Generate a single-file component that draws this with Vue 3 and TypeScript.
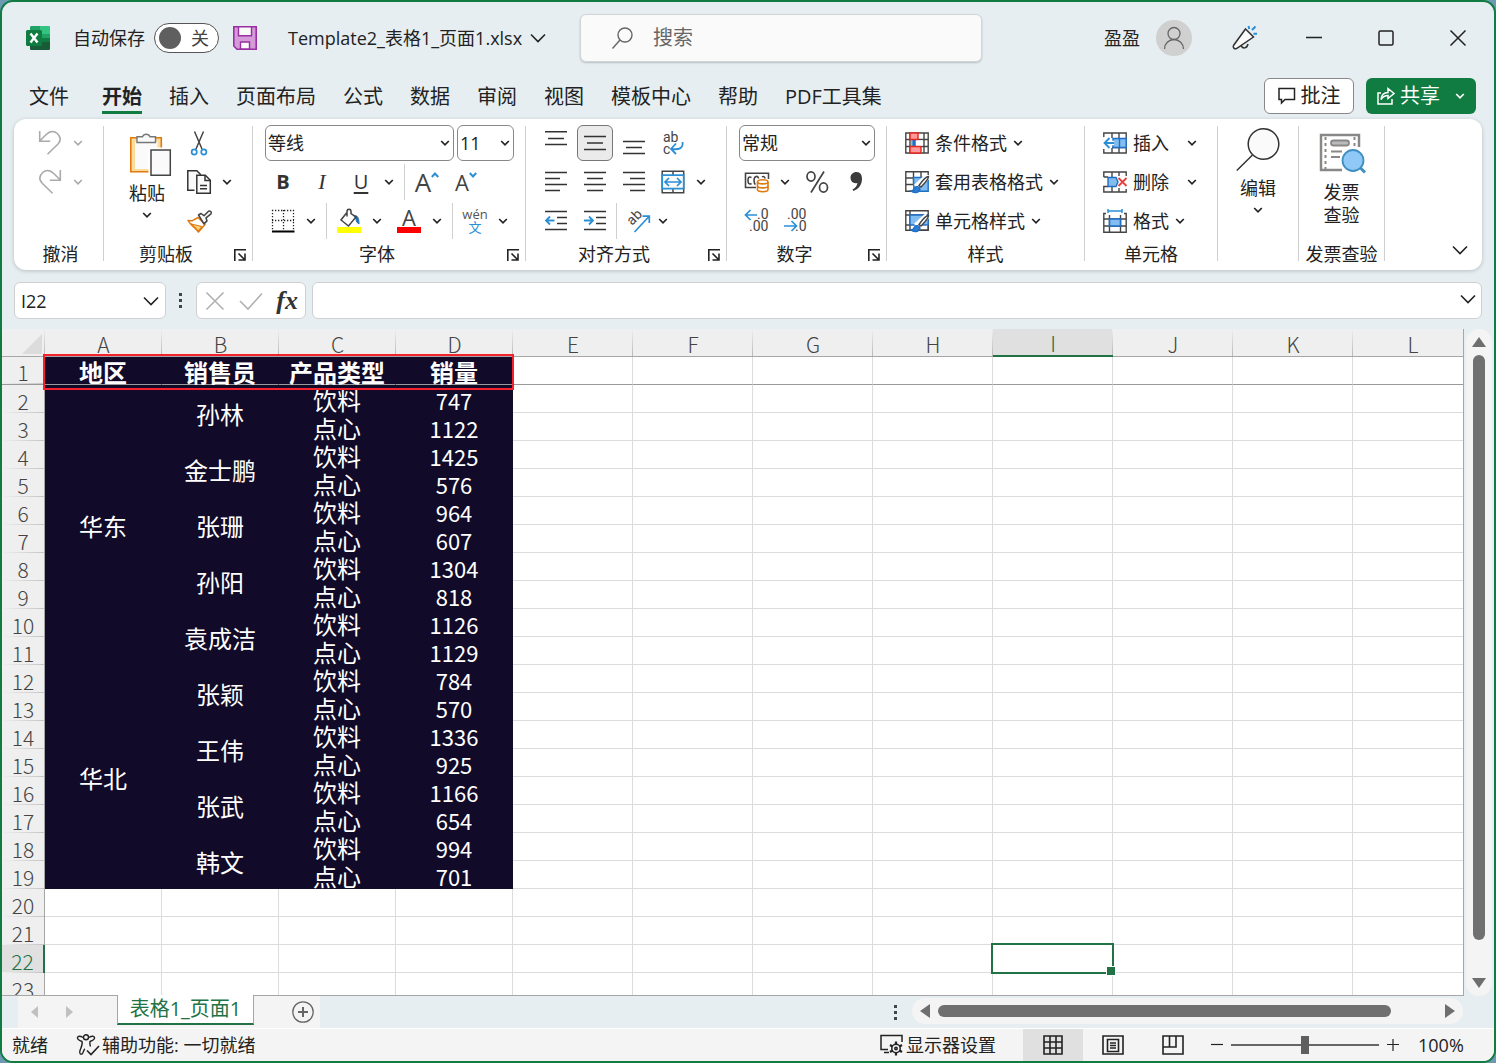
<script setup lang="ts">
import { h, ref } from 'vue'

const Chevron = () =>
  h('svg', { class: 'chev', width: 10, height: 8, viewBox: '0 0 10 8', 'aria-hidden': 'true' }, [
    h('path', { d: 'M1.2 2l3.8 3.8L8.8 2', fill: 'none', stroke: 'currentColor', 'stroke-width': 1.7 }),
  ])

const BigChevron = () =>
  h('svg', { class: 'big-chev', width: 16, height: 10, viewBox: '0 0 16 10', 'aria-hidden': 'true' }, [
    h('path', { d: 'M1 1.5l7 7 7-7', fill: 'none', stroke: 'currentColor', 'stroke-width': 1.6 }),
  ])

const Launcher = () =>
  h('button', { class: 'launcher', 'aria-label': '更多设置' }, [
    h('svg', { width: 12, height: 12, viewBox: '0 0 12 12' }, [
      h('path', { d: 'M.8 12V.8H12M4.5 4.5l6 6M11 4.5V11H4.5', fill: 'none', stroke: '#222', 'stroke-width': 1.6 }),
    ]),
  ])

const tabs = ['文件', '开始', '插入', '页面布局', '公式', '数据', '审阅', '视图', '模板中心', '帮助', 'PDF工具集']
const activeTab = ref('开始')
const autosave = ref(false)
const zoomLevel = ref(100)

const columns = 'ABCDEFGHIJKL'.split('')
const headings = ['地区', '销售员', '产品类型', '销量']

interface Region { name: string; people: { name: string; sales: [number, number] }[] }

const regions: Region[] = [
  {
    name: '华东',
    people: [
      { name: '孙林', sales: [747, 1122] },
      { name: '金士鹏', sales: [1425, 576] },
      { name: '张珊', sales: [964, 607] },
      { name: '孙阳', sales: [1304, 818] },
      { name: '袁成洁', sales: [1126, 1129] },
    ],
  },
  {
    name: '华北',
    people: [
      { name: '张颖', sales: [784, 570] },
      { name: '王伟', sales: [1336, 925] },
      { name: '张武', sales: [1166, 654] },
      { name: '韩文', sales: [994, 701] },
    ],
  },
]

interface Cell { text: string; span: number; kind: string }
interface Row { n: number; cells: Cell[]; blanks: string[] }

const rows: Row[] = []
rows.push({
  n: 1,
  cells: headings.map((text) => ({ text, span: 1, kind: 'head' })),
  blanks: columns.slice(4),
})
for (const region of regions) {
  region.people.forEach((person, i) => {
    person.sales.forEach((value, j) => {
      const cells: Cell[] = []
      if (i === 0 && j === 0) cells.push({ text: region.name, span: region.people.length * 2, kind: 'merged' })
      if (j === 0) cells.push({ text: person.name, span: 2, kind: 'merged' })
      cells.push({ text: j === 0 ? '饮料' : '点心', span: 1, kind: 'word' })
      cells.push({ text: String(value), span: 1, kind: 'num' })
      rows.push({ n: rows.length + 1, cells, blanks: columns.slice(4) })
    })
  })
}
while (rows.length < 23) rows.push({ n: rows.length + 1, cells: [], blanks: columns })
</script>

<template>
  <div class="desktop">
    <div class="window">
      <header class="titlebar">
        <div class="title-left">
          <svg class="logo" width="24" height="24" viewBox="0 0 24 24" aria-hidden="true">
            <path fill="#21a366" d="M5 0h10v8H4V1z" />
            <path fill="#33c481" d="M14 0h9a1 1 0 0 1 1 1v7H14z" />
            <path fill="#107c41" d="M14 8h10v8H14z" />
            <path fill="#21a366" d="M14 8h10v4H14z" />
            <path fill="#185c37" d="M4 12h11v4h9v7a1 1 0 0 1-1 1H5a1 1 0 0 1-1-1z" />
            <rect y="4" width="16" height="16" rx="1.5" fill="#107c41" />
            <path d="M4.500 7.500l7 9M11.500 7.500l-7 9" stroke="#fff" stroke-width="2.400" />
          </svg>
          <label class="auto-text" for="autosave">自动保存</label>
          <span class="toggle"><input id="autosave" v-model="autosave" type="checkbox" /><span>关</span></span>
          <button class="save" aria-label="保存">
            <svg width="24" height="24" viewBox="0 0 24 24">
              <path d="M.8.8h22.400v22.400H4L.8 20z" fill="#d59ad8" stroke="#9a2fa3" stroke-width="1.600" />
              <path d="M5.500.8h13v9h-13zM7.500 23v-7h9v7z" fill="#fafafa" stroke="#9a2fa3" stroke-width="1.400" />
            </svg>
          </button>
          <button class="doc-title">Template2_表格1_页面1.xlsx<BigChevron /></button>
        </div>
        <label class="search">
          <svg width="24" height="24" viewBox="0 0 24 24" aria-hidden="true">
            <circle cx="14" cy="9" r="7" /><path d="M9 14L1.500 22.500" />
          </svg>
          <input type="text" placeholder="搜索" aria-label="搜索" />
        </label>
        <div class="title-right">
          <span class="user">盈盈</span>
          <button class="avatar" aria-label="账户">
            <svg width="24" height="24" viewBox="0 0 24 24" fill="none" stroke="#666" stroke-width="1.300">
              <circle cx="12" cy="7.500" r="6" /><path d="M2.500 23a9.500 9.500 0 0 1 19 0" />
            </svg>
          </button>
          <button class="mega" aria-label="新功能">
            <svg width="26" height="26" viewBox="0 0 26 26" fill="none" stroke="#333" stroke-width="1.500">
              <path d="M10 20c1 4 6 4 7-1" />
              <path d="M14.500 4l8 8L5.500 23.500c-2 1-4-1-3-3z" fill="#fafafa" />
              <path d="M17.500 1l.8 3M24.500 1.500L21 5M26 8.700h-3.500" stroke="#2b8fd6" stroke-width="2" />
            </svg>
          </button>
          <button class="win" aria-label="最小化"><svg width="16" height="16"><path d="M0 7.500h16" /></svg></button>
          <button class="win" aria-label="最大化"><svg width="16" height="16"><rect x="1" y="1" width="14" height="14" rx="1.500" /></svg></button>
          <button class="win" aria-label="关闭"><svg width="16" height="16"><path d="M.5.5l15 15M15.500.5l-15 15" /></svg></button>
        </div>
      </header>

      <nav class="tabs">
        <button v-for="t in tabs" :key="t" class="tab" :class="{ active: t === activeTab }" @click="activeTab = t">{{ t }}</button>
        <button class="comment">
          <svg width="18" height="18" viewBox="0 0 18 18" fill="none" stroke="#222" stroke-width="1.500">
            <path d="M1 1.500h15.500v11H7l-3.500 3.500v-3.500H1z" />
          </svg>批注
        </button>
        <button class="share">
          <svg width="18" height="18" viewBox="0 0 18 18" fill="none" stroke="#fff" stroke-width="1.500">
            <path d="M4 6H1v11h14v-5" /><path d="M4 12.500c.5-5 3.500-7 7-7V1.500l6 5-6 5V8.500c-3 0-5 1-7 4z" />
          </svg>共享<Chevron />
        </button>
      </nav>

      <section class="ribbon">
        <div class="group g-undo">
          <div class="rows">
            <div class="row">
              <button class="ib" aria-label="撤消"><svg width="24" height="25" viewBox="0 0 24 25" class="faded"><path d="M1.700 1v10.200h10.500M1.700 11L8.500 4.200C12 .8 16.300.8 19.300 3.500c3.600 3.500 3.600 7.500.5 10.700L9.500 24.300" /></svg></button>
              <button class="dd faint" aria-label="撤消列表"><Chevron /></button>
            </div>
            <div class="row">
              <button class="ib" aria-label="恢复"><svg width="24" height="25" viewBox="0 0 24 25" class="faded"><path d="M22.300 1v10.200H11.800M22.300 11l-6.800-6.800C12 .8 7.700.8 4.700 3.500 1.100 7 1.100 11 4.200 14.200l10.300 10.100" /></svg></button>
              <button class="dd faint" aria-label="恢复列表"><Chevron /></button>
            </div>
          </div>
          <div class="caption"><span>撤消</span></div>
        </div>
        <i class="sep"></i>

        <div class="group g-clip">
          <div class="body">
            <button class="big paste">
              <svg width="48" height="48" viewBox="0 0 48 48">
                <path d="M7.800 7.800h30.500v34H7.800z" fill="#fbdc9a" stroke="#e07a10" stroke-width="1.600" />
                <path d="M12 11.500h22.500v27.500H12z" fill="#fafafa" />
                <path d="M14 12.500V6.800h5.500a4 4 0 0 1 7.500 0h5.500v5.700z" fill="#fafafa" stroke="#777" stroke-width="1.400" />
                <path d="M25.500 17.500H48V48H25.500z" fill="#fff" />
                <path d="M28 20h19.300v25.300H28z" fill="#fafafa" stroke="#444" stroke-width="1.500" />
              </svg>
              <span>粘贴</span><Chevron />
            </button>
            <div class="rows">
              <div class="row">
                <button class="ib" aria-label="剪切">
                  <svg width="24" height="26" viewBox="0 0 24 26" fill="none">
                    <path d="M7.500 1.500l7.500 17.500M16.500 1.500L9 19" stroke="#444" stroke-width="1.500" />
                    <circle cx="7.200" cy="22" r="2.600" stroke="#2b8fd6" stroke-width="1.700" /><circle cx="16.800" cy="22" r="2.600" stroke="#2b8fd6" stroke-width="1.700" />
                  </svg>
                </button>
              </div>
              <div class="row">
                <button class="ib" aria-label="复制">
                  <svg width="24" height="24" viewBox="0 0 24 24" fill="#fafafa" stroke="#333" stroke-width="1.500">
                    <path d="M7.500 20.200H.8V.8h9l4 4" /><path d="M9.800 5.300h8.500l5 5v13H9.800z" /><path d="M18 5.300v5.200h5.300M13 15.500h7M13 18.800h7" fill="none" />
                  </svg>
                </button>
                <button class="dd" aria-label="复制选项"><Chevron /></button>
              </div>
              <div class="row">
                <button class="ib" aria-label="格式刷">
                  <svg width="25" height="24" viewBox="0 0 25 24" stroke-linejoin="round">
                    <path d="M1 11.500l4 .3 6-3.300 7 7-6.500 7.500C8 18 4 17 1 11.500z" fill="#fff" stroke="#e07a10" stroke-width="1.500" />
                    <path d="M4 15l11 2.500-4 5c-1-3-4-4-7-7.500z" fill="#fbd07a" stroke="#e07a10" stroke-width="1.200" />
                    <path d="M11.500 6l2.500-1.500 3 2.200 4.500-4.500a1.900 1.900 0 0 1 2.500 2.700l-5 4 1 3-3 3z" fill="#fafafa" stroke="#444" stroke-width="1.500" />
                  </svg>
                </button>
              </div>
            </div>
          </div>
          <div class="caption"><span>剪贴板</span><Launcher /></div>
        </div>
        <i class="sep"></i>

        <div class="group g-font">
          <div class="rows">
            <div class="row">
              <span class="combo font-name"><select aria-label="字体"><option>等线</option></select><Chevron /></span>
              <span class="combo font-size"><select aria-label="字号"><option>11</option></select><Chevron /></span>
            </div>
            <div class="row">
              <button class="ib bold">B</button><button class="ib ital">I</button><button class="ib under">U</button>
              <button class="dd" aria-label="下划线选项"><Chevron /></button>
              <i class="vline"></i>
              <button class="ib grow" aria-label="增大字号"><span>A</span><svg width="8" height="6"><path d="M.8 5L4 1.500 7.200 5" /></svg></button>
              <button class="ib shrink" aria-label="减小字号"><span>A</span><svg width="8" height="6"><path d="M.8 1L4 4.500 7.200 1" /></svg></button>
            </div>
            <div class="row">
              <button class="ib" aria-label="边框">
                <svg width="24" height="24" viewBox="0 0 24 24" stroke="#222">
                  <path d="M1.500 1v20M12.500 1v20M22.500 1v20M1 1.500h22M1 11.500h22" stroke-width="1.300" stroke-dasharray="1.300 1.700" /><path d="M1 22.500h22.500" stroke="#000" stroke-width="2" />
                </svg>
              </button>
              <button class="dd" aria-label="边框选项"><Chevron /></button>
              <i class="vline"></i>
              <button class="ib" aria-label="填充颜色">
                <svg width="24" height="26" viewBox="0 0 24 26">
                  <path d="M17 8c3-1 5 1 5 8-2-1-3-3-3-5z" fill="#1f6fb5" stroke="#1f6fb5" />
                  <path d="M9.500 5L4 12l7.500 6L19 9l-5-3.500V3.500c0-3-4-3-4 0v5" fill="none" stroke="#444" stroke-width="1.500" /><path d="M0 19h24v6H0z" fill="#ff0" />
                </svg>
              </button>
              <button class="dd" aria-label="填充颜色选项"><Chevron /></button>
              <button class="ib color" aria-label="字体颜色"><span>A</span><i></i></button>
              <button class="dd" aria-label="字体颜色选项"><Chevron /></button>
              <i class="vline"></i>
              <button class="ib pinyin"><span>wén</span><span class="blue">文</span></button>
              <button class="dd" aria-label="拼音选项"><Chevron /></button>
            </div>
          </div>
          <div class="caption"><span>字体</span><Launcher /></div>
        </div>
        <i class="sep"></i>

        <div class="group g-align">
          <div class="rows">
            <div class="row">
              <button class="ib" aria-label="顶端对齐"><svg class="ln" width="22" height="24"><path d="M0 .8h22M3 7.500h16M0 13.500h22" /></svg></button>
              <button class="ib pressed" aria-label="垂直居中"><svg class="ln" width="22" height="24"><path d="M0 5.500h22M3 12h16M0 18.500h22" /></svg></button>
              <button class="ib" aria-label="底端对齐"><svg class="ln" width="22" height="24"><path d="M0 10.500h22M3 16.500h16M0 22.500h22" /></svg></button>
              <button class="ib" aria-label="自动换行">
                <svg width="24" height="26" viewBox="0 0 24 26" fill="none">
                  <g class="glyph"><text x="2" y="12">ab</text><text x="2" y="24">c</text></g>
                  <path d="M21.500 12c1 6-3 8-11 7M15 13.500l-5 5.500 5 5" stroke="#2b8fd6" stroke-width="1.800" />
                </svg>
              </button>
            </div>
            <div class="row">
              <button class="ib" aria-label="左对齐"><svg class="ln" width="22" height="24"><path d="M0 2.500h22M0 8.500h15M0 14.500h22M0 20.500h15" /></svg></button>
              <button class="ib" aria-label="居中"><svg class="ln" width="22" height="24"><path d="M0 2.500h22M3 8.500h16M0 14.500h22M3 20.500h16" /></svg></button>
              <button class="ib" aria-label="右对齐"><svg class="ln" width="22" height="24"><path d="M0 2.500h22M7 8.500h15M0 14.500h22M7 20.500h15" /></svg></button>
              <button class="ib" aria-label="合并后居中">
                <svg width="24" height="24" viewBox="0 0 24 24" fill="none" stroke="#444" stroke-width="1.500">
                  <path d="M1.200 1.200h21.500v21.500H1.200zM12 1v4M12 19v4" /><path d="M1.200 5.200h21.500v13.500H1.200z" fill="#fafafa" stroke="#2b8fd6" stroke-width="1.700" />
                  <path d="M4.500 12h15M8 8l-4 4 4 4M16 8l4 4-4 4" stroke="#2b8fd6" stroke-width="1.700" />
                </svg>
              </button>
              <button class="dd" aria-label="合并选项"><Chevron /></button>
            </div>
            <div class="row">
              <button class="ib" aria-label="减少缩进"><svg class="ln" width="22" height="24"><path d="M0 2.500h22M12 8.500h10M12 14.500h10M0 20.500h22" /><path class="bl" d="M1 11.500h8.500M5 7.500l-4 4 4 4" /></svg></button>
              <button class="ib" aria-label="增加缩进"><svg class="ln" width="22" height="24"><path d="M0 2.500h22M12 8.500h10M12 14.500h10M0 20.500h22" /><path class="bl" d="M0 11.500h8.500M5 7.500l4 4-4 4" /></svg></button>
              <i class="vline tight"></i>
              <button class="ib" aria-label="方向">
                <svg width="26" height="26" viewBox="0 0 26 26" fill="none">
                  <g class="glyph"><text x="0" y="0" transform="translate(7 18) rotate(-45)">ab</text></g>
                  <path d="M9.500 24L24 8.500M17.500 8.200h6.800v6.800" stroke="#2b8fd6" stroke-width="1.700" />
                </svg>
              </button>
              <button class="dd slim" aria-label="方向选项"><Chevron /></button>
            </div>
          </div>
          <div class="caption"><span>对齐方式</span><Launcher /></div>
        </div>
        <i class="sep"></i>

        <div class="group g-num">
          <div class="rows">
            <div class="row"><span class="combo num-format"><select aria-label="数字格式"><option>常规</option></select><Chevron /></span></div>
            <div class="row">
              <button class="ib" aria-label="会计数字格式">
                <svg width="26" height="22" viewBox="0 0 26 22" fill="none" stroke="#444" stroke-width="1.600">
                  <path d="M12 16.500H1.500V2.200h23V8" /><path d="M7.500 6.500C4.500 5 4 7 4 9.500s1 4.500 3.500 3M11.500 13.500c-2-1-2-7.500.5-8 1.500-.4 2.500.5 2.500 2M18 6c1-.8 3-.5 3 1.500" />
                  <path d="M13.500 11c0-3 10.500-3 10.500 0v7.500c0 3-10.500 3-10.500 0z" fill="#fff" stroke="#e07a10" /><path d="M13.500 11c0 2.500 10.500 2.500 10.500 0M13.500 15c0 2.500 10.500 2.500 10.500 0" stroke="#e07a10" />
                </svg>
              </button>
              <button class="dd" aria-label="会计格式选项"><Chevron /></button>
              <button class="ib pct" aria-label="百分比样式">
                <svg width="24" height="24" viewBox="0 0 24 24" fill="none" stroke="#444" stroke-width="1.700"><ellipse cx="6" cy="6.500" rx="4" ry="4.600" /><ellipse cx="18.500" cy="17.500" rx="4" ry="4.600" /><path d="M19 1.500L6 22.500" /></svg>
              </button>
              <button class="ib" aria-label="千位分隔样式">
                <svg width="24" height="24" viewBox="0 0 24 24"><path d="M12.500 2c4 0 5.500 3 5.500 7 0 5-3 10-8.500 12l-1-1.500c3-1.500 4.500-3.500 5-6.500-4 1-7-1.500-7-5.500C6.500 4.500 9 2 12.500 2z" fill="#3b3b3b" /></svg>
              </button>
            </div>
            <div class="row">
              <button class="ib" aria-label="增加小数位数">
                <svg width="26" height="26" viewBox="0 0 26 26" fill="none"><g class="glyph digits"><text x="13" y="11">.0</text><text x="5" y="23">.00</text></g><path d="M1.500 7H13M6.500 2l-5 5 5 5" stroke="#2b8fd6" stroke-width="1.700" /></svg>
              </button>
              <button class="ib" aria-label="减少小数位数">
                <svg width="26" height="26" viewBox="0 0 26 26" fill="none"><g class="glyph digits"><text x="4" y="11">.00</text><text x="12" y="23">.0</text></g><path d="M1 18h12M8.500 13l5 5-5 5" stroke="#2b8fd6" stroke-width="1.700" /></svg>
              </button>
            </div>
          </div>
          <div class="caption"><span>数字</span><Launcher /></div>
        </div>
        <i class="sep"></i>

        <div class="group g-style">
          <div class="rows">
            <button class="row wide">
              <svg width="24" height="22" viewBox="0 0 24 22" fill="none" stroke="#444" stroke-width="1.400">
                <path d="M.8 1h22.400v20H.8zM5 1v20M19 1v20M1 7.500h22M1 14.500h22" /><path d="M6 7.500h6v7H6z" fill="#83bdf0" stroke="none" /><path d="M9 7.500v7" stroke="#1f6fc5" stroke-width="3" /><path d="M5 1h8v6.500H5zM5 14.500h11V21H5z" fill="#ff9a9a" stroke="#e8251f" /><path d="M11 8.500h7v5h-7z" fill="#fff" stroke="none" />
              </svg><span>条件格式</span><Chevron />
            </button>
            <button class="row wide">
              <svg width="24" height="24" viewBox="0 0 24 24" fill="none" stroke="#444" stroke-width="1.400">
                <path d="M23.200 5V1.800H.8v19.500H6M8.500 2v6M16 2v6M1 8h22M1 14.500h7M8.500 8v7" /><path d="M8.500 7.500h14.700v13.800H9z" fill="#83bdf0" stroke="#1f6fc5" />
                <path d="M22.500 6.500L11 17" stroke="#fff" stroke-width="6" /><path d="M23.500 6.500c-2 0-6 4-9.500 9l2 1.500c4-4 7.500-8.500 7.500-10.500z" fill="#fafafa" /><path d="M6 21c2 0 3-1 3.500-3 1-2 5-2 5.500 1-1 4-6 4.500-9 2z" fill="#2b7fd0" stroke="#1f6fc5" />
              </svg><span>套用表格格式</span><Chevron />
            </button>
            <button class="row wide">
              <svg width="24" height="24" viewBox="0 0 24 24" fill="none" stroke="#444" stroke-width="1.400">
                <path d="M.8 1.800h22.400v19.500H.8zM5 2v19M1 6h22M1 16h5" /><path d="M5 6h18.200v10H5z" fill="#83bdf0" stroke="#1f6fc5" /><path d="M23 16v5H12" fill="#fff" />
                <path d="M22.500 6.500L11 17" stroke="#fff" stroke-width="6" /><path d="M23.500 6.500c-2 0-6 4-9.500 9l2 1.500c4-4 7.500-8.500 7.500-10.500z" fill="#fafafa" /><path d="M6 21c2 0 3-1 3.500-3 1-2 5-2 5.500 1-1 4-6 4.500-9 2z" fill="#2b7fd0" stroke="#1f6fc5" />
              </svg><span>单元格样式</span><Chevron />
            </button>
          </div>
          <div class="caption"><span>样式</span></div>
        </div>
        <i class="sep"></i>

        <div class="group g-cells">
          <div class="rows">
            <button class="row wide far">
              <svg width="24" height="22" viewBox="0 0 24 22" fill="none" stroke="#444" stroke-width="1.400">
                <path d="M.8 5V1h22.400v20H.8v-4M9 1v5M16 1v20M9 16v5M9 15.500h14" /><path d="M10 6.500h13.200v9H10z" fill="#83bdf0" stroke="#1f6fc5" /><path d="M16.500 7v8" stroke="#1f6fc5" /><path d="M11 11H1.500M6.500 6l-5 5 5 5" stroke="#fff" stroke-width="4.500" /><path d="M11 11H1.500M6.500 6l-5 5 5 5" stroke="#2b8fd6" stroke-width="1.800" />
              </svg><span>插入</span><Chevron />
            </button>
            <button class="row wide far">
              <svg width="24" height="22" viewBox="0 0 24 22" fill="none" stroke="#444" stroke-width="1.400">
                <path d="M.8 6V1h22.400v4M.8 6H5M5 15.500H.8V21h22.400v-3M9 1v5M16 1v4M9 16v5M16 17v4" /><path d="M5 6.500h8l2 4.500-2 4.500H5z" fill="#83bdf0" stroke="#1f6fc5" /><path d="M15.500 7l8 8M23.500 7l-8 8" stroke="#e8403c" stroke-width="1.800" />
              </svg><span>删除</span><Chevron />
            </button>
            <button class="row wide">
              <svg width="24" height="24" viewBox="0 0 24 24" fill="none" stroke="#444" stroke-width="1.400">
                <path d="M3 4.500H.8v18.700h22.400V4.500H21M6.500 6v17M17.500 6v17M1 10h22M1 17h22" /><path d="M6.500 10h11v7h-11z" fill="#83bdf0" stroke="#1f6fc5" stroke-width="1.600" /><path d="M5 2h14M5 0v4M19 0v4" stroke="#2b8fd6" stroke-width="1.500" />
              </svg><span>格式</span><Chevron />
            </button>
          </div>
          <div class="caption"><span>单元格</span></div>
        </div>
        <i class="sep"></i>

        <div class="group g-edit">
          <button class="big edit">
            <svg width="44" height="46" viewBox="0 0 44 46" fill="none" stroke="#333" stroke-width="1.500"><circle cx="27.500" cy="17" r="15.300" fill="#fafafa" /><path d="M16.500 28L.8 43.500" /></svg>
            <span>编辑</span><Chevron />
          </button>
        </div>
        <i class="sep"></i>

        <div class="group g-invoice">
          <button class="big invoice">
            <svg width="48" height="42" viewBox="0 0 48 42" fill="none" stroke="#8a8886" stroke-width="2.500">
              <path d="M24 38H3V3h38v12" /><path d="M7.500 5v32M36.500 5v9" stroke-dasharray="3 3" stroke-width="2" />
              <rect x="13" y="8.500" width="18" height="5" rx="2.500" fill="#bbb" stroke-width="1.800" /><path d="M13 19.500h11M13 25h9" stroke-width="2" />
              <path d="M41 34.500l6 6" stroke="#3f8fc0" stroke-width="3" /><circle cx="35" cy="28.500" r="10.500" fill="#90c8f8" stroke="#3f8fc0" stroke-width="1.800" />
            </svg>
            <span>发票</span><span>查验</span>
          </button>
          <div class="caption"><span>发票查验</span></div>
        </div>
        <i class="sep"></i>
        <button class="collapse" aria-label="折叠功能区"><BigChevron /></button>
      </section>

      <section class="formula">
        <div class="namebox"><input type="text" value="I22" aria-label="名称框" /><BigChevron /></div>
        <i class="dots"></i>
        <div class="fx">
          <button aria-label="取消"><svg width="20" height="20"><path d="M1.500 1.500l17 17M18.500 1.500l-17 17" /></svg></button>
          <button aria-label="输入"><svg width="24" height="20"><path d="M1 10l8 8L23 2.500" /></svg></button>
          <button class="fn" aria-label="插入函数">fx</button>
        </div>
        <div class="bar"><input type="text" aria-label="编辑栏" /><BigChevron /></div>
      </section>

      <section class="sheet">
        <div class="viewport">
          <table class="grid">
            <colgroup>
              <col class="c-row" />
              <col v-for="c in columns" :key="c" :class="c < 'E' ? 'c-data' : 'c-std'" />
            </colgroup>
            <thead>
              <tr>
                <th class="corner"><svg width="20" height="20"><path d="M20 0v20H0z" fill="#dcdcdc" /></svg></th>
                <th v-for="c in columns" :key="c" scope="col" :class="{ sel: c === 'I' }">{{ c }}</th>
              </tr>
            </thead>
            <tbody>
              <tr v-for="row in rows" :key="row.n" :class="{ frozen: row.n === 1 }">
                <th scope="row" :class="{ sel: row.n === 22 }">{{ row.n }}</th>
                <td v-for="(cell, i) in row.cells" :key="'d' + i" class="dark" :class="cell.kind" :rowspan="cell.span">{{ cell.text }}</td>
                <td v-for="c in row.blanks" :key="c" :class="{ current: row.n === 22 && c === 'I' }"></td>
              </tr>
            </tbody>
          </table>
          <div class="marker"></div>
        </div>
        <div class="vscroll">
          <svg width="14" height="10"><path d="M7 0l7 10H0z" /></svg>
          <i></i>
          <svg class="down" width="14" height="10"><path d="M7 10l7-10H0z" /></svg>
        </div>
      </section>

      <section class="sheetbar">
        <div class="sheet-tabs">
          <button class="nav-arrow" aria-label="上一张"><svg width="8" height="12"><path d="M7 0v12L0 6z" /></svg></button>
          <button class="nav-arrow" aria-label="下一张"><svg width="8" height="12"><path d="M1 0v12l7-6z" /></svg></button>
          <button class="sheet-tab">表格1_页面1</button>
          <button class="add" aria-label="新工作表"><svg width="22" height="22" viewBox="0 0 22 22" fill="none" stroke="#666"><circle cx="11" cy="11" r="10.200" stroke-width="1.300" /><path d="M11 6v10M6 11h10" stroke-width="2" /></svg></button>
        </div>
        <i class="dots small"></i>
        <div class="hscroll">
          <svg width="10" height="14"><path d="M10 0v14L0 7z" /></svg>
          <i></i>
          <svg width="10" height="14"><path d="M0 0v14l10-7z" /></svg>
        </div>
      </section>

      <footer class="status">
        <span class="ready">就绪</span>
        <button class="access">
          <svg width="24" height="22" viewBox="0 0 24 22" fill="none" stroke="#222" stroke-width="1.400">
            <path d="M7 3.500c-3-2-5-1.500-5.500 0S2 6 6 7.500c1 3-1 6-2 9s.5 4 2 3.500 1-4 3-5M13 3.500c3-2 5-1.500 5.500 0S18 6 14 7.500c-.5 2 0 3.500.5 5" /><circle cx="10" cy="3.200" r="2.500" /><path d="M11 16.500l4 4 8-8.500" stroke-width="1.600" />
          </svg>辅助功能: 一切就绪
        </button>
        <button class="display">
          <svg width="24" height="22" viewBox="0 0 24 22" fill="none" stroke="#222" stroke-width="1.500">
            <path d="M8 15.500H1V1.500h21V8M4 18.500h5" /><circle cx="16" cy="14.500" r="4.200" stroke-width="1.500" /><circle cx="16" cy="14.500" r="1.200" /><path d="M16 7.500v3M16 18.500v3M10 11l2.500 1.500M19.500 16.500L22 18M10 18l2.500-1.500M19.500 12.500L22 11" stroke-width="2.200" />
          </svg>显示器设置
        </button>
        <button class="view on" aria-label="普通"><svg width="20" height="20"><path d="M1 1h18v18H1zM7 1v18M13 1v18M1 7h18M1 13h18" /></svg></button>
        <button class="view" aria-label="页面布局"><svg width="22" height="20"><path d="M1 1h20v18H1zM5.500 4.500h11v12h-11zM8 8h6M8 10.500h6M8 13h6" /></svg></button>
        <button class="view" aria-label="分页预览"><svg width="22" height="20"><path d="M1 1h20v18H1zM1 12h13V1M7.500 1v11" /></svg></button>
        <button class="step" aria-label="缩小"><svg width="12" height="12"><path d="M0 5.500h12" /></svg></button>
        <input v-model="zoomLevel" class="zoom" type="range" min="10" max="190" aria-label="缩放" />
        <button class="step" aria-label="放大"><svg width="12" height="12"><path d="M0 5.500h12M6 0v12" /></svg></button>
        <span class="percent">{{ zoomLevel }}%</span>
      </footer>
    </div>
  </div>
</template>

<style>
body {
  margin: 0;
  background: #6d9ab2;
}
</style>

<style scoped>
.desktop,
.desktop * {
  box-sizing: border-box;
}
.desktop {
  height: 100vh;
  font: 18px/24px 'Open Sans', 'Noto Sans CJK SC', sans-serif;
  color: #222;
}
button,
input,
select {
  font: inherit;
  color: inherit;
  border: 0;
  padding: 0;
  margin: 0;
  background: none;
}
input {
  outline: none;
  min-width: 0;
}
svg {
  display: block;
  flex: none;
  overflow: visible;
}
i {
  display: block;
  flex: none;
}
.window {
  height: 100%;
  display: flex;
  flex-direction: column;
  border: 2px solid #107c41;
  border-radius: 13px;
  background: #e6eef1;
  overflow: hidden;
}

/* title bar */
.titlebar {
  flex: none;
  height: 72px;
  display: flex;
  align-items: center;
}
.title-left {
  flex: none;
  width: 578px;
  padding-left: 24px;
  display: flex;
  align-items: center;
}
.auto-text {
  margin-left: 23px;
}
.toggle {
  width: 65px;
  height: 30px;
  margin-left: 9px;
  padding: 0 9px 0 4px;
  border: 1px solid #555;
  border-radius: 15px;
  background: #fff;
  display: flex;
  align-items: center;
  justify-content: space-between;
}
.toggle input {
  appearance: none;
  width: 22px;
  height: 22px;
  border-radius: 50%;
  background: #5f5f5f;
}
.toggle span {
  color: #444;
}
.save {
  margin-left: 14px;
}
.doc-title {
  margin-left: 31px;
  display: flex;
  align-items: center;
  gap: 8px;
  white-space: nowrap;
}
.search {
  flex: 0 1 402px;
  height: 48px;
  padding-left: 30px;
  display: flex;
  align-items: center;
  gap: 18px;
  border: 1px solid #d2d5d7;
  border-radius: 6px;
  background: #fafafa;
  box-shadow: 0 1px 2px #0003;
  font-size: 20px;
}
.search svg {
  fill: none;
  stroke: #666;
  stroke-width: 1.4;
}
.search input {
  flex: 1;
}
.search input::placeholder {
  color: #666;
  opacity: 1;
}
.title-right {
  margin-left: auto;
  display: flex;
  align-items: center;
}
.avatar {
  width: 36px;
  height: 36px;
  margin-left: 16px;
  border-radius: 50%;
  background: #d0d0d0;
  display: grid;
  place-items: center;
}
.mega {
  width: 36px;
  margin: 0 16px 0 34px;
  display: grid;
  place-items: center;
}
.win {
  width: 72px;
  height: 48px;
  display: grid;
  place-items: center;
}
.win svg {
  fill: none;
  stroke: #222;
  stroke-width: 1.5;
}

/* ribbon tabs */
.tabs {
  flex: none;
  height: 36px;
  margin: 4px 18px 5px 27px;
  display: flex;
  gap: 27px;
  font-size: 20px;
}
.tab {
  height: 36px;
  padding-top: 5px;
  border-bottom: 3px solid transparent;
  white-space: nowrap;
}
.tab:first-child {
  margin-right: 6px;
}
.tab.active {
  font-weight: 700;
  border-color: #107c41;
}
.comment,
.share {
  height: 36px;
  display: flex;
  align-items: center;
  justify-content: center;
  gap: 5px;
  border-radius: 6px;
  white-space: nowrap;
}
.comment {
  width: 90px;
  margin-left: auto;
  border: 1px solid #888;
  background: #fff;
}
.share {
  width: 110px;
  margin-left: -15px;
  background: #107c41;
  color: #fff;
}
.share .chev {
  margin-left: 10px;
}

/* ribbon */
.ribbon {
  flex: none;
  margin: 0 12px;
  padding: 4px 0 2px;
  display: flex;
  border-radius: 12px;
  background: #fff;
  box-shadow: 0 1px 4px #0003;
}
.group {
  flex: none;
  display: flex;
  flex-direction: column;
}
.sep {
  width: 1px;
  margin: 3px 0 7px;
  background: #d0d0d0;
}
.body {
  display: flex;
}
.rows {
  display: flex;
  flex-direction: column;
}
.row {
  height: 39px;
  display: flex;
  align-items: center;
}
.caption {
  height: 28px;
  margin-top: auto;
  display: flex;
  align-items: center;
  text-align: center;
}
.caption span {
  flex: 1;
}
.launcher {
  width: 24px;
  height: 28px;
  padding-top: 2px;
  display: grid;
  place-items: center;
}
.g-undo {
  width: 89px;
}
.g-undo .rows {
  padding-left: 18px;
}
.g-undo .caption {
  padding-left: 4px;
}
.faded {
  fill: none;
  stroke: #aaa;
  stroke-width: 1.6;
}
.g-clip {
  width: 148px;
}
.g-font {
  width: 272px;
}
.g-align {
  width: 200px;
}
.g-num {
  width: 159px;
}
.g-style {
  width: 197px;
}
.g-cells {
  width: 132px;
}
.g-edit {
  width: 80px;
  align-items: center;
}
.g-invoice {
  width: 85px;
}
.g-font .rows,
.g-align .rows,
.g-num .rows {
  padding-left: 12px;
}
.ib {
  flex: none;
  width: 36px;
  height: 36px;
  display: flex;
  align-items: center;
  justify-content: center;
}
.ib + .ib {
  margin-left: 3px;
}
.dd {
  width: 20px;
  height: 36px;
  display: grid;
  place-items: center;
}
.dd.slim {
  width: 14px;
}
.dd.faint {
  color: #aaa;
}
.dd + .ib {
  margin-left: 4px;
}
.vline {
  width: 1px;
  height: 36px;
  margin: 0 4px 0 5px;
  background: #d0d0d0;
}
.vline.tight {
  margin: 0 3px;
}
.pressed {
  border: 1px solid #777;
  border-radius: 6px;
  background: #ebebeb;
}
.big {
  height: 117px;
  display: flex;
  flex-direction: column;
  align-items: center;
}
.paste {
  width: 54px;
  margin: 0 7px 0 16px;
  padding-top: 7px;
}
.paste span,
.edit span {
  margin: 3px 0 6px;
}
.edit {
  padding-top: 4px;
}
.invoice {
  padding-top: 9px;
}
.invoice span {
  line-height: 23px;
}
.invoice svg {
  margin-bottom: 7px;
}
.combo {
  height: 36px;
  position: relative;
  display: flex;
  align-items: center;
}
.combo select {
  appearance: none;
  width: 100%;
  height: 36px;
  padding-left: 2px;
  border: 1px solid #888;
  border-radius: 6px;
  background: #fff;
}
.combo .chev {
  position: absolute;
  right: 4px;
  pointer-events: none;
}
.font-name {
  width: 189px;
  margin-right: 3px;
}
.font-size {
  width: 57px;
}
.num-format {
  width: 136px;
}
.bold {
  font-size: 20px;
  font-weight: 700;
  color: #333;
}
.ital {
  font: italic 22px/24px 'Liberation Serif', serif;
  color: #333;
}
.under {
  font-size: 20px;
  text-decoration: underline;
  text-underline-offset: 3px;
  color: #333;
}
.grow,
.shrink,
.color {
  color: #444;
}
.grow span {
  font-size: 26px;
}
.shrink span {
  font-size: 22px;
}
.grow svg,
.shrink svg {
  margin-bottom: 14px;
  fill: none;
  stroke: #2b8fd6;
  stroke-width: 2;
}
.color {
  flex-direction: column;
}
.color span {
  font-size: 22px;
  line-height: 19px;
}
.color i {
  width: 24px;
  height: 6px;
  background: #f00;
}
.pinyin {
  flex-direction: column;
  font-size: 13px;
  line-height: 13px;
  color: #555;
}
.blue {
  color: #2b8fd6;
}
.ln {
  fill: none;
  stroke: #333;
  stroke-width: 1.5;
}
.ln .bl {
  stroke: #2b8fd6;
  stroke-width: 1.8;
}
.glyph {
  font: 14px 'Roboto', sans-serif;
  fill: #444;
}
.g-style .rows,
.g-cells .rows {
  padding-left: 18px;
}
.wide {
  gap: 6px;
  white-space: nowrap;
}
.far .chev {
  margin-left: 12px;
}
.collapse {
  margin: auto 14px 13px auto;
}

/* formula bar */
.formula {
  flex: none;
  height: 37px;
  margin: 12px 12px 10px;
  display: flex;
}
.namebox,
.fx,
.bar {
  display: flex;
  align-items: center;
  border: 1px solid #d0d0d0;
  border-radius: 6px;
  background: #fff;
}
.namebox {
  width: 152px;
  padding: 0 6px;
}
.namebox input,
.bar input {
  flex: 1;
  width: 0;
}
.dots {
  width: 3px;
  height: 15px;
  margin: 11px 14px 0 13px;
  background: repeating-linear-gradient(#444 0 3px, transparent 3px 6px);
}
.fx {
  width: 110px;
  padding: 0 7px 0 8px;
  justify-content: space-between;
}
.fx svg {
  fill: none;
  stroke: #b0b0b0;
  stroke-width: 1.6;
}
.fn {
  font: italic 700 26px/30px 'Liberation Serif', serif;
  color: #333;
}
.bar {
  flex: 1;
  margin-left: 6px;
  padding: 0 5px 0 8px;
}
.bar .big-chev {
  margin-bottom: 4px;
}

/* sheet */
.sheet {
  flex: 1;
  min-height: 0;
  display: flex;
}
.viewport {
  flex: 1;
  min-width: 0;
  position: relative;
  overflow: hidden;
  border-right: 1px solid #a6a6a6;
  border-bottom: 1px solid #a6a6a6;
  background: #fff;
}
.grid {
  width: 1471px;
  table-layout: fixed;
  border-collapse: separate;
  border-spacing: 0;
  font-family: 'Noto Sans CJK SC', sans-serif;
  line-height: 24px;
  text-align: center;
}
.c-row {
  width: 43px;
}
.c-data {
  width: 117px;
}
.c-std {
  width: 120px;
}
.grid th {
  height: 28px;
  padding: 3px 0 0;
  font-size: 21px;
  font-weight: 300;
  color: #444;
}
.grid thead th {
  border-bottom: 1px solid #a6a6a6;
  background: linear-gradient(#efefef, #b8b8b8) right / 1px 100% no-repeat #efefef;
}
.grid thead th.sel {
  padding-top: 2px;
  border-bottom: 2px solid #217346;
  background-color: #e0e0e0;
  color: #217346;
}
.corner svg {
  margin: 0 0 0 20px;
}
.grid tbody th {
  border-right: 1px solid #a6a6a6;
  background: linear-gradient(90deg, #efefef, #c4c4c4) bottom / 100% 1px no-repeat #efefef;
}
.grid tbody th.sel {
  border-right: 2px solid #217346;
  background-color: #e0e0e0;
  color: #217346;
}
.grid td {
  height: 28px;
  padding: 3px 0 0;
  border-right: 1px solid #dcdcdc;
  border-bottom: 1px solid #dcdcdc;
}
.grid .dark {
  border-color: #110b29;
  background: #110b29;
  color: #fff;
  font-size: 24px;
}
.grid .num {
  font-size: 22px;
}
.grid .head {
  font-weight: 700;
}
.grid .frozen th,
.grid .frozen td,
.grid .frozen .dark {
  padding-top: 3px;
  border-bottom: 1px solid #999;
}
.current {
  position: relative;
}
.current::before {
  content: '';
  position: absolute;
  inset: -2px;
  border: 2px solid #217346;
}
.current::after {
  content: '';
  position: absolute;
  right: -4px;
  bottom: -4px;
  width: 8px;
  height: 8px;
  border: 1px solid #fff;
  background: #217346;
}
.marker {
  position: absolute;
  left: 41px;
  top: 25px;
  width: 471px;
  height: 36px;
  border: 2px solid #f5222d;
}
.vscroll {
  width: 26px;
  margin: 0 2px;
  padding: 8px 0;
  display: flex;
  flex-direction: column;
  align-items: center;
  border-radius: 13px;
  background: #f4f4f4;
  fill: #6e6e6e;
}
.vscroll i {
  width: 12px;
  flex: 1;
  margin: 8px 0 38px;
  border-radius: 6px;
  background: #707070;
}

/* sheet tabs */
.sheetbar {
  flex: none;
  height: 32px;
  display: flex;
}
.sheet-tabs {
  width: 302px;
  margin-left: 16px;
  display: flex;
  align-items: flex-start;
  background: #f4f4f4;
}
.nav-arrow {
  width: 34px;
  height: 32px;
  display: grid;
  place-items: center;
  fill: #c0c0c0;
}
.sheet-tab {
  width: 137px;
  height: 30px;
  margin: -1px 0 0 31px;
  border: 1px solid #a6a6a6;
  border-top: 0;
  border-bottom: 2px solid #217346;
  background: #fff;
  color: #217346;
  font-size: 20px;
  position: relative;
}
.add {
  margin: 5px 0 0 38px;
}
.dots.small {
  margin: 9px 15px 0 auto;
}
.hscroll {
  width: 551px;
  height: 26px;
  margin: 2px 31px 0 0;
  padding: 0 8px;
  display: flex;
  align-items: center;
  border-radius: 13px;
  background: #f4f4f4;
  fill: #6e6e6e;
}
.hscroll i {
  flex: 1;
  height: 12px;
  margin: 0 54px 0 8px;
  border-radius: 6px;
  background: #707070;
}

/* status bar */
.status {
  flex: none;
  height: 33px;
  padding: 0 28px 0 10px;
  display: flex;
  align-items: center;
  border-top: 1px solid #fff;
  background: #f4f4f4;
  white-space: nowrap;
}
.access,
.display {
  display: flex;
  align-items: center;
  gap: 2px;
}
.access {
  margin-left: 28px;
}
.display {
  margin: 0 27px 0 auto;
}
.view {
  width: 60px;
  height: 32px;
  display: grid;
  place-items: center;
}
.view.on {
  background: #e0e0e0;
}
.view svg,
.step svg {
  fill: none;
  stroke: #222;
  stroke-width: 1.6;
}
.view + .step {
  margin-left: 8px;
}
.step svg {
  stroke-width: 1.2;
}
.zoom {
  appearance: none;
  width: 148px;
  height: 18px;
  margin: 0 8px;
  background: linear-gradient(#666, #666) center / 100% 2px no-repeat;
}
.zoom::-webkit-slider-thumb {
  appearance: none;
  width: 8px;
  height: 18px;
  background: #5f5f5f;
}
.percent {
  width: 48px;
  margin-left: 19px;
}
</style>
